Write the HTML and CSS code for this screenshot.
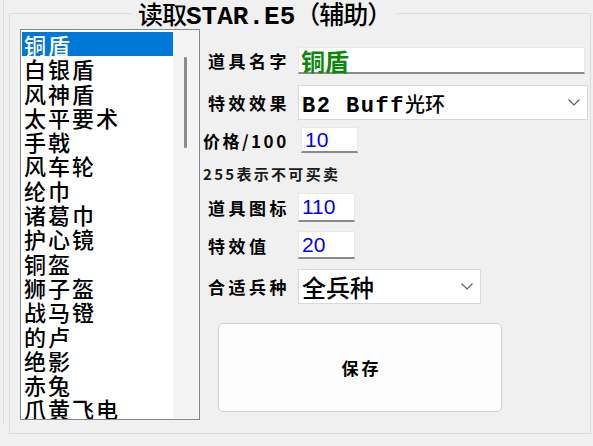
FILE: index.html
```html
<!DOCTYPE html>
<html lang="zh-CN">
<head>
<meta charset="utf-8">
<title>读取STAR.E5（辅助）</title>
<link rel="stylesheet" href="styles.css">
</head>
<body>
<div class="window">
  <div class="edge"></div>
  <fieldset class="group">
    <legend class="group-title">读取<span class="latin">STAR.E5</span>（辅助）</legend>
    <div class="group-body">
      <div class="listbox">
        <ul class="items">
          <li class="item selected">铜盾</li>
          <li class="item">白银盾</li>
          <li class="item">风神盾</li>
          <li class="item">太平要术</li>
          <li class="item">手戟</li>
          <li class="item">风车轮</li>
          <li class="item">纶巾</li>
          <li class="item">诸葛巾</li>
          <li class="item">护心镜</li>
          <li class="item">铜盔</li>
          <li class="item">狮子盔</li>
          <li class="item">战马镫</li>
          <li class="item">的卢</li>
          <li class="item">绝影</li>
          <li class="item">赤兔</li>
          <li class="item">爪黄飞电</li>
        </ul>
        <div class="scroll"><div class="thumb"></div></div>
      </div>

      <form class="props">
        <div class="row row-name">
          <label class="lbl">道具名字</label>
          <div class="edit edit-name">铜盾</div>
        </div>
        <div class="row row-effect">
          <label class="lbl">特效效果</label>
          <div class="combo combo-effect">
            <span class="combo-text"><span class="mono">B2 Buff</span>光环</span>
            <svg class="chev" width="12" height="7" viewBox="0 0 12 7"><polyline points="0.5,0.5 6,6 11.5,0.5" fill="none" stroke="#606060" stroke-width="1.2"/></svg>
          </div>
        </div>
        <div class="row row-price">
          <label class="lbl lbl-tight">价格/100</label>
          <div class="edit edit-num">10</div>
        </div>
        <div class="row row-note">
          <span class="note">255表示不可买卖</span>
        </div>
        <div class="row row-icon">
          <label class="lbl">道具图标</label>
          <div class="edit edit-num edit-icon">110</div>
        </div>
        <div class="row row-value">
          <label class="lbl">特效值</label>
          <div class="edit edit-num edit-icon">20</div>
        </div>
        <div class="row row-unit">
          <label class="lbl">合适兵种</label>
          <div class="combo combo-unit">
            <span class="combo-text big">全兵种</span>
            <svg class="chev" width="12" height="7" viewBox="0 0 12 7"><polyline points="0.5,0.5 6,6 11.5,0.5" fill="none" stroke="#606060" stroke-width="1.2"/></svg>
          </div>
        </div>
        <div class="row row-save">
          <button type="button" class="btn">保存</button>
        </div>
      </form>
    </div>
  </fieldset>
</div>
</body>
</html>
```

FILE: styles.css
```css
html, body {
  margin: 0;
  padding: 0;
}

body {
  width: 593px;
  height: 446px;
  overflow: hidden;
  background: #f0f0f0;
  font-family: "Noto Sans CJK SC", sans-serif;
  color: #000;
}

.window {
  display: flex;
  align-items: flex-start;
  height: 446px;
}

/* edge of the neighbouring panel */
.edge {
  width: 3px;
  height: 423px;
  border-right: 1px solid #dcdcdc;
}

.group {
  box-sizing: border-box;
  width: 582px;
  height: 434px;
  margin: 0 0 0 5px;
  padding: 0;
  border: 1px solid #dcdcdc;
  min-width: 0;
}

.group-title {
  height: 27px;
  margin-left: 122px;
  padding: 0 6px;
  font-size: 25px;
  font-weight: 500;
  line-height: 27px;
  letter-spacing: -1px;
  font-family: "Noto Sans CJK SC", sans-serif;
}

.group-title .latin {
  font-family: "Liberation Mono", monospace;
  font-size: 26px;
  font-weight: 700;
  line-height: 1;
  letter-spacing: 0;
}

.group-body {
  display: flex;
  padding: 2px 0 0 10px;
}

/* item list */
.listbox {
  box-sizing: border-box;
  width: 180px;
  height: 391px;
  border: 1px solid #828790;
  background: #fff;
  display: flex;
}

.items {
  width: 151px;
  margin: 0;
  padding: 2px 0 0 1px;
  list-style: none;
  overflow: hidden;
}

.item {
  height: 24.3px;
  line-height: 24px;
  padding-left: 2px;
  font-size: 22px;
  font-weight: 500;
  white-space: nowrap;
  letter-spacing: 2px;
}

.item.selected {
  background: #0078d7;
  color: #fff;
}

.scroll {
  width: 26px;
  background: #f4f4f4;
}

.thumb {
  width: 3px;
  height: 91px;
  margin: 27px 0 0 11px;
  background: #8c8c8c;
  border-radius: 1px;
}

/* property form */
.props {
  display: flex;
  flex-direction: column;
  margin: 0 0 0 3px;
  flex: 1;
}

.row {
  display: flex;
  align-items: center;
}

.row-name  { height: 27px; margin-top: 18px; }
.row-effect { height: 35px; margin-top: 11px; }
.row-price { height: 26px; margin-top: 7px; }
.row-note  { height: 40px; }
.row-icon  { height: 29px; }
.row-value { height: 28px; margin-top: 9px; }
.row-unit  { height: 35px; margin-top: 10px; }
.row-save  { height: 89px; margin-top: 19px; }

.lbl {
  box-sizing: border-box;
  width: 95px;
  padding-left: 5px;
  font-size: 17px;
  font-weight: 700;
  letter-spacing: 3.5px;
  white-space: nowrap;
}

.lbl-tight {
  width: 98px;
  padding-left: 0;
  letter-spacing: 2.5px;
}

.note {
  font-size: 15px;
  font-weight: 700;
  letter-spacing: 2.3px;
  color: #1a1a1a;
  white-space: nowrap;
}

.edit {
  box-sizing: border-box;
  height: 100%;
  background: #fff;
  border: 1px solid #e8e8e8;
  border-bottom: 2px solid #8a8a8a;
  display: flex;
  align-items: center;
  white-space: nowrap;
}

.edit-name {
  width: 287px;
  padding-left: 2px;
  font-size: 24px;
  font-weight: 700;
  color: #0a8a0a;
}

.edit-num {
  width: 57px;
  padding-left: 3px;
  font-family: "Liberation Sans", sans-serif;
  font-size: 21px;
  color: #0000ff;
}

.combo {
  box-sizing: border-box;
  height: 100%;
  background: #fff;
  border: 1px solid #d9d9d9;
  display: flex;
  align-items: center;
  justify-content: space-between;
  padding: 0 7px 0 3px;
}

.combo-effect { width: 290px; }
.combo-unit { width: 183px; }

.combo-text {
  font-size: 20px;
  font-weight: 500;
  white-space: nowrap;
  padding-top: 3px;
}

.combo-text .mono {
  font-family: "Liberation Mono", monospace;
  font-weight: 700;
  font-size: 22px;
  letter-spacing: 1.5px;
}

.combo-text.big {
  font-size: 24px;
  padding-top: 0;
}

.chev {
  display: block;
}

.btn {
  box-sizing: border-box;
  width: 284px;
  height: 89px;
  margin-left: 15px;
  background: #fdfdfd;
  border: 1px solid #d0d0d0;
  border-radius: 5px;
  font-family: "Noto Sans CJK SC", sans-serif;
  font-size: 17px;
  font-weight: 700;
  letter-spacing: 3px;
  color: #000;
  padding: 0 0 0 3px;
}
```
